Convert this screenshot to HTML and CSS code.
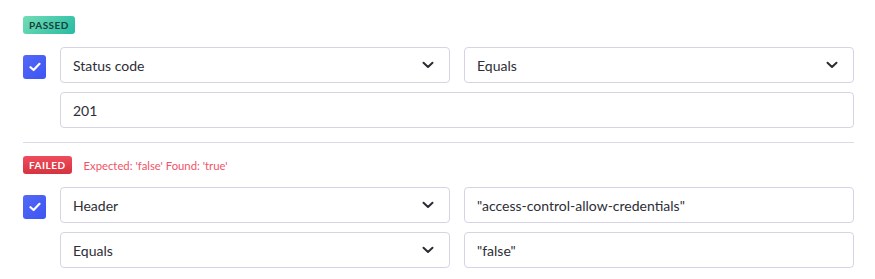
FILE: index.html
```html
<!DOCTYPE html>
<html lang="en">
<head>
    <meta charset="UTF-8">
    <title>Assertions</title>
    <link rel="stylesheet" href="styles.css">
</head>
<body>
    <div class="assertion">
        <div class="result">
            <span class="badge passed">Passed</span>
        </div>
        <div class="rule">
            <span class="checkbox">
                <svg width="12" height="10" viewBox="0 0 12 10"><path d="M1.5 5.2 L4.6 8 L10.5 1.8" fill="none" stroke="#fff" stroke-width="2.2" stroke-linecap="round" stroke-linejoin="round"/></svg>
            </span>
            <div class="fields">
                <div class="field select">Status code
                    <svg class="chevron" width="12" height="8" viewBox="0 0 12 8"><path d="M1.5 1.8 L6 6 L10.5 1.8" fill="none" stroke="#2b2b33" stroke-width="2" stroke-linecap="round" stroke-linejoin="round"/></svg>
                </div>
                <div class="field select">Equals
                    <svg class="chevron" width="12" height="8" viewBox="0 0 12 8"><path d="M1.5 1.8 L6 6 L10.5 1.8" fill="none" stroke="#2b2b33" stroke-width="2" stroke-linecap="round" stroke-linejoin="round"/></svg>
                </div>
                <div class="field wide">201</div>
            </div>
        </div>
    </div>

    <div class="assertion">
        <div class="result">
            <span class="badge failed">Failed</span>
            <span class="message">Expected: 'false' Found: 'true'</span>
        </div>
        <div class="rule">
            <span class="checkbox">
                <svg width="12" height="10" viewBox="0 0 12 10"><path d="M1.5 5.2 L4.6 8 L10.5 1.8" fill="none" stroke="#fff" stroke-width="2.2" stroke-linecap="round" stroke-linejoin="round"/></svg>
            </span>
            <div class="fields">
                <div class="field select">Header
                    <svg class="chevron" width="12" height="8" viewBox="0 0 12 8"><path d="M1.5 1.8 L6 6 L10.5 1.8" fill="none" stroke="#2b2b33" stroke-width="2" stroke-linecap="round" stroke-linejoin="round"/></svg>
                </div>
                <div class="field">"access-control-allow-credentials"</div>
                <div class="field select">Equals
                    <svg class="chevron" width="12" height="8" viewBox="0 0 12 8"><path d="M1.5 1.8 L6 6 L10.5 1.8" fill="none" stroke="#2b2b33" stroke-width="2" stroke-linecap="round" stroke-linejoin="round"/></svg>
                </div>
                <div class="field">"false"</div>
            </div>
        </div>
    </div>
</body>
</html>
```

FILE: styles.css
```css
body {
    margin: 0;
    padding: 16px 21px 0 23px;
    font-family: 'Lato', 'Noto Sans', sans-serif;
    background: #ffffff;
    color: #2e2e36;
}

.assertion {
    padding-bottom: 14px;
}

.assertion + .assertion {
    border-top: 1px solid #dcdae6;
    padding-top: 13px;
}

.result {
    display: flex;
    align-items: center;
    height: 18px;
    margin-bottom: 13px;
}

.badge {
    display: inline-flex;
    align-items: center;
    height: 18px;
    padding: 0 6px;
    border-radius: 3px;
    font-size: 10px;
    font-weight: bold;
    letter-spacing: 0.5px;
    text-transform: uppercase;
}

.badge.passed {
    background: linear-gradient(135deg, #72dcb6, #27bca3); /* Green */
    color: #183f37;
}

.badge.failed {
    background: linear-gradient(180deg, #ef4d5d, #d63340); /* Red */
    color: #ffffff;
}

.message {
    margin-left: 12px;
    font-size: 11.3px;
    color: #f05468;
}

.rule {
    display: flex;
    align-items: flex-start;
}

.checkbox {
    width: 23px;
    height: 24px;
    margin-top: 8px;
    margin-right: 14px;
    border-radius: 3px;
    background: linear-gradient(135deg, #5469f6, #3c55f3); /* Blue */
    display: flex;
    align-items: center;
    justify-content: center;
    flex-shrink: 0;
}

.fields {
    display: grid;
    grid-template-columns: 390px 390px;
    column-gap: 14px;
    row-gap: 9px;
}

.field {
    height: 36px;
    box-sizing: border-box;
    border: 1px solid #d6d4e4;
    border-radius: 4px;
    padding: 0 12px;
    display: flex;
    align-items: center;
    font-size: 14px;
    color: #2e2e36;
}

.field.wide {
    grid-column: 1 / 3;
}

.field.select {
    justify-content: space-between;
}

.chevron {
    margin-right: 3px;
}
```
